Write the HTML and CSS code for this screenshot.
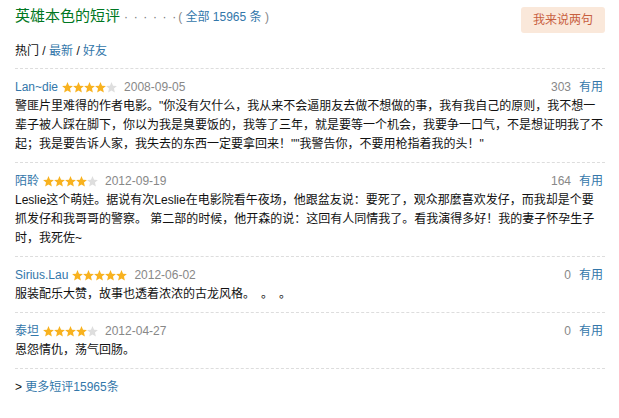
FILE: index.html
```html
<!DOCTYPE html>
<html lang="zh-CN">
<head>
<meta charset="utf-8">
<title>英雄本色的短评</title>
<link rel="stylesheet" href="styles.css">
</head>
<body>
<div class="wrap">
  <div class="top">
    <h2 class="title">英雄本色的短评<span class="dots">· · · · · ·</span><span class="paren">(&nbsp;<a class="link" href="#">全部 15965 条</a>&nbsp;)</span></h2>
    <a class="say" href="#">我来说两句</a>
  </div>
  <div class="tabs"><span class="cur">热门</span> / <a class="link" href="#">最新</a> / <a class="link" href="#">好友</a></div>

  <div class="comments">
    <div class="item">
      <div class="head">
        <a class="link user" href="#">Lan~die</a>
        <svg class="stars" width="55" height="11" viewBox="0 0 55 11">
          <defs><polygon id="star" points="5.5,0.1 7.03,3.75 10.9,4.05 7.97,6.6 8.85,10.5 5.5,8.45 2.15,10.5 3.03,6.6 0.1,4.05 3.97,3.75"/></defs>
          <use href="#star" x="0" class="on"/><use href="#star" x="11" class="on"/><use href="#star" x="22" class="on"/><use href="#star" x="33" class="on"/><use href="#star" x="44" class="off"/>
        </svg>
        <span class="date">2008-09-05</span>
        <span class="votes"><span class="count">303</span><a class="link" href="#">有用</a></span>
      </div>
      <p class="text">警匪片里难得的作者电影。"你没有欠什么，我从来不会逼朋友去做不想做的事，我有我自己的原则，我不想一辈子被人踩在脚下，你以为我是臭要饭的，我等了三年，就是要等一个机会，我要争一口气，不是想证明我了不起；我是要告诉人家，我失去的东西一定要拿回来！""我警告你，不要用枪指着我的头！"</p>
    </div>

    <div class="item">
      <div class="head">
        <a class="link user" href="#">陌聆</a>
        <svg class="stars" width="55" height="11" viewBox="0 0 55 11">
          <use href="#star" x="0" class="on"/><use href="#star" x="11" class="on"/><use href="#star" x="22" class="on"/><use href="#star" x="33" class="on"/><use href="#star" x="44" class="off"/>
        </svg>
        <span class="date">2012-09-19</span>
        <span class="votes"><span class="count">164</span><a class="link" href="#">有用</a></span>
      </div>
      <p class="text">Leslie这个萌娃。据说有次Leslie在电影院看午夜场，他跟盆友说：要死了，观众那麼喜欢发仔，而我却是个要抓发仔和我哥哥的警察。 第二部的时候，他开森的说：这回有人同情我了。看我演得多好！我的妻子怀孕生子时，我死佐~</p>
    </div>

    <div class="item">
      <div class="head">
        <a class="link user" href="#">Sirius.Lau</a>
        <svg class="stars" width="55" height="11" viewBox="0 0 55 11">
          <use href="#star" x="0" class="on"/><use href="#star" x="11" class="on"/><use href="#star" x="22" class="on"/><use href="#star" x="33" class="on"/><use href="#star" x="44" class="on"/>
        </svg>
        <span class="date">2012-06-02</span>
        <span class="votes"><span class="count">0</span><a class="link" href="#">有用</a></span>
      </div>
      <p class="text">服装配乐大赞，故事也透着浓浓的古龙风格<span class="dotsend">。。。</span></p>
    </div>

    <div class="item">
      <div class="head">
        <a class="link user" href="#">泰坦</a>
        <svg class="stars" width="55" height="11" viewBox="0 0 55 11">
          <use href="#star" x="0" class="on"/><use href="#star" x="11" class="on"/><use href="#star" x="22" class="on"/><use href="#star" x="33" class="on"/><use href="#star" x="44" class="off"/>
        </svg>
        <span class="date">2012-04-27</span>
        <span class="votes"><span class="count">0</span><a class="link" href="#">有用</a></span>
      </div>
      <p class="text">恩怨情仇，荡气回肠。</p>
    </div>
  </div>

  <div class="more">&gt; <a class="link" href="#">更多短评15965条</a></div>
</div>
</body>
</html>
```

FILE: styles.css
```css
body {
  margin: 0;
  background: #fff;
  color: #111;
  font-family: "Liberation Sans", Arial, "Noto Sans CJK SC", sans-serif;
  font-size: 12px;
  text-spacing-trim: space-all;
  text-autospace: no-autospace;
}

.wrap {
  padding: 0 14px 0 15px;
}

.link {
  color: #37a;
  text-decoration: none;
}

.top {
  display: flex;
  justify-content: space-between;
  align-items: flex-start;
  height: 33px;
}

.title {
  margin: 5px 0 0;
  font-size: 15px;
  font-weight: normal;
  line-height: 22px;
  color: #072;
}

.dots {
  font-size: 12px;
  color: #777;
  margin-left: 4px;
  word-spacing: 2.3px;
}

.paren {
  font-size: 12px;
  color: #888;
  margin-left: 2px;
}

.say {
  margin-top: 7px;
  height: 26px;
  line-height: 26px;
  padding: 0 12px;
  background: #fae8da;
  color: #c8603f;
  border-radius: 3px;
  text-decoration: none;
  font-size: 12px;
}

.tabs {
  margin: 9px 0 8px;
  line-height: 18px;
  color: #111;
}

.comments {
  border-top: 1px dashed #ddd;
}

.item {
  padding: 8px 0 8px;
  border-bottom: 1px dashed #ddd;
}

.head {
  display: flex;
  align-items: center;
  height: 20px;
  line-height: 20px;
}

.stars {
  display: block;
  margin-left: 4px;
}

.stars .on {
  fill: #f8b21f;
}

.stars .off {
  fill: #dedede;
}

.date {
  margin-left: 7px;
  color: #888;
}

.votes {
  margin-left: auto;
  margin-right: 2px;
  display: flex;
  gap: 8px;
}

.count {
  color: #888;
}

.text {
  margin: 0;
  line-height: 19px;
  color: #111;
}

.dotsend {
  letter-spacing: 6px;
}

.more {
  margin-top: 9px;
  line-height: 18px;
  color: #111;
}
```
